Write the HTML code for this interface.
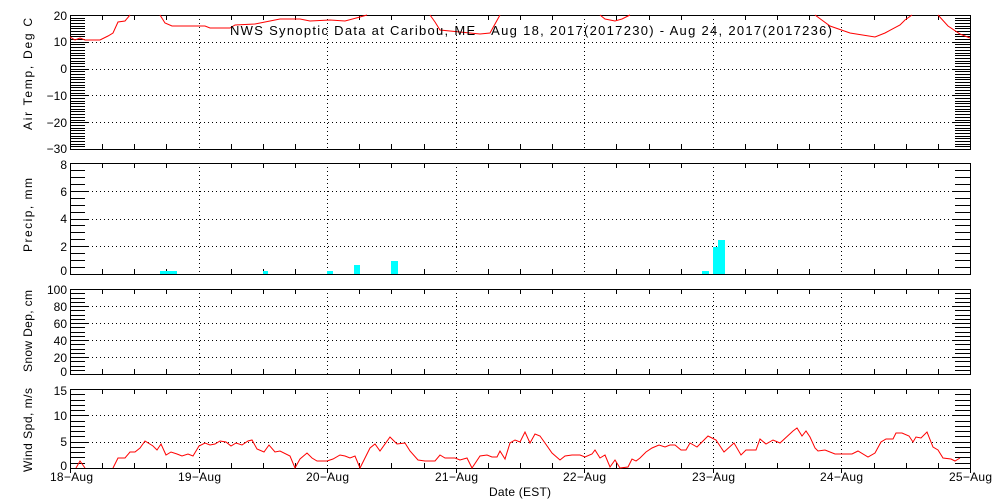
<!DOCTYPE html>
<html><head><meta charset="utf-8"><style>
html,body{margin:0;padding:0;background:#fff;}
svg{display:block;font-family:"Liberation Sans",sans-serif;font-size:12px;}
</style></head><body>
<svg id="s" width="1000" height="500" xmlns="http://www.w3.org/2000/svg">
<g id="g" stroke="#000" fill="none" stroke-width="1" shape-rendering="crispEdges"></g>
<g fill="#00ffff">
<rect x="160" y="271" width="17" height="3"/>
<rect x="263" y="271" width="5" height="3"/>
<rect x="327" y="271" width="6" height="3"/>
<rect x="354" y="265" width="6" height="9"/>
<rect x="391" y="261" width="7" height="13"/>
<rect x="702" y="271" width="7" height="3"/>
<rect x="713" y="247" width="6" height="27"/>
<rect x="718" y="240" width="7" height="34"/>
</g>
<g fill="none" stroke="#ff0000" stroke-width="1">
<polyline points="70,37 75,40 80,38 85,40 100,40 108,36 113,33 118,22 125,21 130,15"/>
<polyline points="160,15 165,23 172,26 205,26 210,28 230,28 235,25 255,24 265,22 280,19 300,19 310,21 330,20 345,21 360,17 367,15"/>
<polyline points="430,15 435,22 440,30 470,33 480,34 490,33 495,24 500,15"/>
<polyline points="600,15 605,19 615,21 622,19 630,15"/>
<polyline points="815,15 830,26 850,33 875,37 885,33 900,25 905,20 912,15"/>
<polyline points="938,15 948,26 960,34 970,38"/>
<polyline points="76,468 80,461 85,468"/>
<polyline points="113,468 118,458 125,458 130,452 135,452 140,448 145,441 153,446 157,450 161,444 166,455 171,452 177,454 182,456 188,454 193,456 199,446 205,443 210,445 215,444 220,441 226,442 231,446 236,443 242,445 248,441 252,440 257,449 264,452 269,445 275,452 280,451 290,456 295,468 300,459 307,453 312,458 317,461 327,461 333,459 340,455 345,456 350,458 355,456 360,468 370,448 375,444 380,451 390,437 397,444 405,443 410,451 418,460 425,461 435,461 440,455 445,458 455,458 460,460 467,458 472,468 480,456 487,455 492,457 497,457 500,451 505,459 510,443 515,440 520,442 525,432 530,443 535,434 540,436 545,443 552,453 560,460 565,456 572,455 580,455 585,457 592,454 595,450 600,458 605,455 610,467 615,460 620,468 628,467 632,459 636,461 640,458 646,452 652,448 659,445 665,447 670,445 675,445 681,450 686,450 690,443 697,447 708,436 716,440 724,452 734,443 741,455 746,450 756,450 760,439 766,444 773,440 780,443 793,431 797,428 802,436 806,431 810,437 815,448 818,451 825,450 835,454 852,454 858,451 868,457 875,453 881,442 886,439 893,439 896,433 902,433 909,436 913,442 916,437 921,438 927,432 933,447 938,450 943,458 951,459 955,461 960,458"/>
</g>
<g fill="#000">
<text x="230" y="35" font-size="13" textLength="602" lengthAdjust="spacing">NWS Synoptic Data at Caribou, ME&#160;&#160;&#160;Aug 18, 2017(2017230) - Aug 24, 2017(2017236)</text>
<g text-anchor="end">
<text x="67" y="20">20</text><text x="67" y="46">10</text><text x="67" y="73">0</text><text x="67" y="100">−10</text><text x="67" y="127">−20</text><text x="67" y="153">−30</text>
<text x="67" y="169">8</text><text x="67" y="196">6</text><text x="67" y="223">4</text><text x="67" y="251">2</text><text x="67" y="275">0</text>
<text x="67" y="294">100</text><text x="67" y="311">80</text><text x="67" y="328">60</text><text x="67" y="345">40</text><text x="67" y="362">20</text><text x="67" y="376">0</text>
<text x="67" y="395">15</text><text x="67" y="420">10</text><text x="67" y="446">5</text><text x="67" y="470">0</text>
</g>
<g>
<text x="50" y="481" textLength="43" lengthAdjust="spacing">18−Aug</text><text x="178" y="481" textLength="43" lengthAdjust="spacing">19−Aug</text><text x="306" y="481" textLength="43" lengthAdjust="spacing">20−Aug</text><text x="435" y="481" textLength="43" lengthAdjust="spacing">21−Aug</text><text x="563" y="481" textLength="43" lengthAdjust="spacing">22−Aug</text><text x="692" y="481" textLength="43" lengthAdjust="spacing">23−Aug</text><text x="820" y="481" textLength="43" lengthAdjust="spacing">24−Aug</text><text x="949" y="481" textLength="43" lengthAdjust="spacing">25−Aug</text>
<text x="489" y="496" textLength="62" lengthAdjust="spacing">Date (EST)</text>
<text transform="translate(32,130) rotate(-90)" textLength="112" lengthAdjust="spacing">Air Temp, Deg C</text>
<text transform="translate(32,252) rotate(-90)" textLength="74" lengthAdjust="spacing">Precip, mm</text>
<text transform="translate(32,372) rotate(-90)" textLength="82" lengthAdjust="spacing">Snow Dep, cm</text>
<text transform="translate(32,472) rotate(-90)" textLength="84" lengthAdjust="spacing">Wind Spd, m/s</text>
</g>
</g>
</svg>
<script>
var g=document.getElementById('g'),h='';
function L(x1,y1,x2,y2,d){h+='<line x1="'+x1+'" y1="'+y1+'" x2="'+x2+'" y2="'+y2+'"'+(d?' stroke-dasharray="1,3"':'')+'/>';}
var panels=[[15,149,20,-30,1,10],[163,274,8,0,0.5,2],[289,374,100,0,5,20],[389,468,15,0,1,5]];
var days=[70,198.6,327.1,455.7,584.3,712.9,841.4,970];
panels.forEach(function(p){
 var t=p[0],b=p[1],v0=p[2],v1=p[3],mn=p[4],mj=p[5];
 h+='<rect x="70.5" y="'+(t+.5)+'" width="900" height="'+(b-t)+'"/>';
 function Y(v){return Math.round(t+(v0-v)/(v0-v1)*(b-t))+.5;}
 for(var v=v1;v<=v0+1e-6;v+=mn){var y=Y(v);var maj=Math.abs(v/mj-Math.round(v/mj))<1e-6;L(70,y,maj?88:85,y);L(maj?952:955,y,970,y);
  if(maj&&v!=v0&&v!=v1)L(88,y,952,y,1);}
 for(var i=1;i<7;i++){var x=Math.round(days[i])+.5;L(x,t,x,b,1);}
 for(var i=0;i<28;i++){var x=Math.round(70+i*900/28)+.5;if(i%4==0)continue;L(x,t,x,t+5);L(x,b-5,x,b);}
});
for(var i=0;i<8;i++){var x=Math.round(days[i])+.5;L(x,468,x,473);}
g.innerHTML=h;
</script>
</body></html>
